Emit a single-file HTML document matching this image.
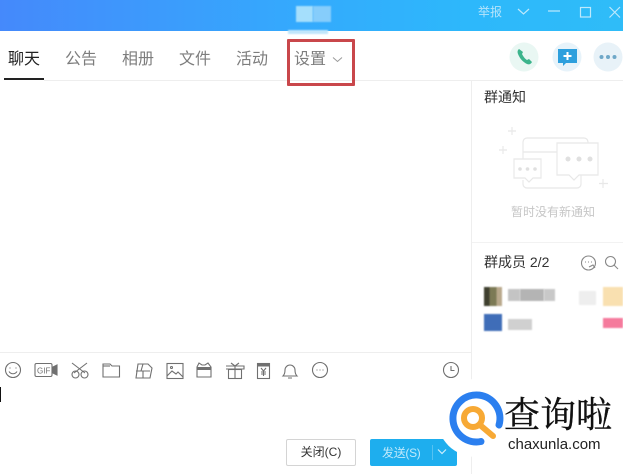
<!DOCTYPE html>
<html lang="zh"><head><meta charset="utf-8">
<style>
html,body{margin:0;padding:0}
#p{position:relative;width:623px;height:474px;overflow:hidden;background:#fff;font-family:"Liberation Sans","Noto Sans CJK SC",sans-serif;filter:blur(.35px)}
#p div{position:absolute}
.t{font-size:16px;line-height:20px;color:#7d7d7d;top:50px;white-space:nowrap}
.b{position:absolute}
.m{filter:blur(.8px)}
</style></head><body><div id="p">
<div style="left:0;top:0;width:623px;height:31px;background:linear-gradient(90deg,#4589fb 0%,#35a8fd 45%,#2db8fb 75%,#2fbcf8 100%)"></div>
<div class="m" style="left:296px;top:6px;width:17px;height:16px;background:#a5dffc"></div>
<div class="m" style="left:313px;top:6px;width:18px;height:16px;background:#86cdfb"></div>
<div class="m" style="left:288px;top:30px;width:40px;height:4px;background:#bfe6fb"></div>
<div style="left:478px;top:4px;font-size:12px;line-height:16px;color:#b5e4fb;white-space:nowrap">举报</div>
<svg class="b" style="left:510px;top:0" width="113" height="31" fill="none" stroke="#bde9fc" stroke-width="1.2"><path d="M8 9l5.500 5 5.500-5"/><path d="M38 11h12"/><rect x="70.500" y="7.500" width="10" height="9.500"/><path d="M99.500 7l10.500 10.500M110 7l-10.500 10.500"/></svg>
<div class="t" style="left:8px;color:#222">聊天</div>
<div style="left:4px;top:78px;width:40px;height:2px;background:#222"></div>
<div style="left:44px;top:80px;width:579px;height:1px;background:#eeeeee"></div>
<div class="t" style="left:65px">公告</div>
<div class="t" style="left:122px">相册</div>
<div class="t" style="left:179px">文件</div>
<div class="t" style="left:236px">活动</div>
<div class="t" style="left:294px">设置</div>
<svg class="b" style="left:332px;top:56px" width="11" height="8" fill="none" stroke="#9a9a9a"><path d="M1 1.500l4.500 4 4.500-4"/></svg>
<div style="left:287px;top:39px;width:62px;height:41px;border:3px solid #c9474b;border-radius:1px"></div>

<svg class="b" style="left:505px;top:38px" width="118" height="40">
<circle cx="19" cy="19" r="14.500" fill="#e9f7f3"/>
<path d="M14 11c-1 1-2 2-1 5 2 5 5 8 9 10 2 1 4 0 5-2l-3-3-2 1c-2-1-4-4-5-6l1-2z" fill="#3cb48c"/>
<circle cx="62" cy="19" r="14.500" fill="#e7f3fa"/>
<path d="M53 11h19v14H61l-3 3v-3h-5z" fill="#2d9fdd"/><path d="M62.500 14v8M58.500 18h8" stroke="#fff" stroke-width="2"/>
<circle cx="103" cy="19" r="14.500" fill="#e8f2f8"/>
<circle cx="96.500" cy="19" r="2" fill="#6fa8c8"/><circle cx="103" cy="19" r="2" fill="#6fa8c8"/><circle cx="109.500" cy="19" r="2" fill="#6fa8c8"/>
</svg>

<div style="left:471px;top:81px;width:1px;height:393px;background:#eeeeee"></div>
<div style="left:484px;top:87px;font-size:14px;line-height:20px;color:#333;white-space:nowrap">群通知</div>
<svg class="b" style="left:495px;top:122px" width="115" height="78" fill="none" stroke="#e8e8e8" stroke-width="1.2">
<path d="M17 5v8M13 9h8M8 24v8M4 28h8M108 57v9M104 61.500h9"/>
<path d="M28 37V20a4 4 0 0 1 4-4h57a4 4 0 0 1 4 4v5M28 30h34M28 58v4a4 4 0 0 0 4 4h50a4 4 0 0 0 4-4v-10"/>
<path d="M62 21h41v32H84l-5 5-5-5-12 0z" fill="#fff"/>
<path d="M19 37h27v19H38l-4 4-4-4H19z" fill="#fff"/>
<g fill="#e0e0e0" stroke="none"><circle cx="73" cy="37" r="2.500"/><circle cx="84" cy="37" r="2.500"/><circle cx="95" cy="37" r="2.500"/><circle cx="25" cy="47" r="1.800"/><circle cx="32.500" cy="47" r="1.800"/><circle cx="40" cy="47" r="1.800"/></g>
</svg>
<div style="left:511px;top:204px;font-size:12px;line-height:17px;color:#c6c6c6;white-space:nowrap">暂时没有新通知</div>
<div style="left:472px;top:242px;width:151px;height:1px;background:#f2f2f2"></div>
<div style="left:484px;top:252px;font-size:14px;line-height:20px;color:#333;white-space:nowrap">群成员 2/2</div>
<svg class="b" style="left:580px;top:254px" width="43" height="18" fill="none" stroke="#888" stroke-width="1.1">
<circle cx="8.500" cy="9" r="7"/><path d="M5 8h1M8 8h1M11 8h1M9 13l4-2 2 3"/>
<circle cx="30.500" cy="7.500" r="5"/><path d="M34 11l4 4"/>
</svg>
<div class="m" style="left:484px;top:287px;width:18px;height:19px;background:linear-gradient(90deg,#3e3f2e 0 30%,#7c7a55 30% 70%,#b9a98c 70%)"></div>
<div class="m" style="left:508px;top:289px;width:12px;height:12px;background:#c4c4c4"></div>
<div class="m" style="left:520px;top:289px;width:24px;height:12px;background:#b4b4b4"></div>
<div class="m" style="left:544px;top:289px;width:11px;height:12px;background:#c8c8c8"></div>
<div class="m" style="left:579px;top:291px;width:17px;height:14px;background:#eeeeee"></div>
<div class="m" style="left:603px;top:287px;width:20px;height:19px;background:#f9e0b0"></div>
<div class="m" style="left:484px;top:314px;width:18px;height:17px;background:#3f6db8"></div>
<div class="m" style="left:508px;top:319px;width:24px;height:11px;background:#d0d0d0"></div>
<div class="m" style="left:603px;top:318px;width:20px;height:10px;background:#f57a9c"></div>

<div style="left:0;top:352px;width:471px;height:1px;background:#eeeeee"></div>
<svg class="b" style="left:0;top:358px" width="471" height="24" fill="none" stroke="#707070" stroke-width="1.1">
<circle cx="13" cy="12" r="7.500"/><path d="M9 13.500c2 3 6 3 8 0M10 9.500v1M16 9.500v1"/>
<rect x="35" y="5.500" width="17" height="13" rx="1.500"/><text x="37" y="15.500" font-family="Liberation Sans" font-size="8" fill="#707070" stroke="none">GIF</text><path d="M53 9l4-2v10l-4-2z" fill="#707070"/>
<path d="M72 5l13 10M87 5L74 15"/><circle cx="75.500" cy="16.500" r="3.500"/><circle cx="84.500" cy="16.500" r="3.500"/>
<path d="M103 6h7l2 2h7.500v11h-16.500z"/><path d="M103 8h7"/>
<path d="M138 6h10l4 4-2 10h-14z"/><path d="M136 13h14M143 13v7M143 6l-2 7"/>
<rect x="167" y="5.500" width="16" height="15"/><path d="M167 18l5-5 4 3 2-2 5 5"/><circle cx="171.500" cy="9.500" r="1"/>
<path d="M197 9l2-4 3 2h3l3-2 3 4v10h-14z"/><path d="M197 10.500h14" stroke-width="3"/>
<rect x="228.500" y="11.500" width="13" height="9"/><path d="M226 8h18v3h-18M235 8v12M231 5l4 3 4-3"/>
<rect x="257.500" y="5.500" width="12" height="15"/><path d="M258 7h11" stroke-width="3"/><path d="M261 10l2.500 3 2.500-3M263.500 13v5M261 14h5M261 16h5"/>
<path d="M283 18c1-1 2-3 2-6a5 5 0 0 1 10 0c0 3 1 5 2 6zM288 20h4"/>
<circle cx="320" cy="12" r="7.500"/><path d="M316.500 12h1M319.500 12h1M322.500 12h1"/>
<circle cx="451" cy="12" r="7.500"/><path d="M451 8v4.500h3.500"/>
</svg>
<div style="left:0;top:387px;width:1px;height:15px;background:#111"></div>

<div style="left:286px;top:439px;width:68px;height:25px;border:1px solid #d4d4d4;border-radius:2px;font-size:12px;line-height:25px;color:#333;text-align:center">关闭(C)</div>
<div style="left:370px;top:439px;width:87px;height:27px;background:#1eaeee;border-radius:2px"></div>
<div style="left:382px;top:444px;font-size:12px;line-height:18px;letter-spacing:-.3px;color:#bfe9fb;white-space:nowrap">发送(S)</div>
<div style="left:432px;top:445px;width:1px;height:15px;background:#55c2f2"></div>
<svg class="b" style="left:437px;top:448px" width="11" height="8" fill="none" stroke="#cdeefc" stroke-width="1.2"><path d="M1 1.500l4 4 4-4"/></svg>

<div style="left:437px;top:379px;width:78px;height:78px;border-radius:50%;background:#fff"></div>
<svg class="b" style="left:445px;top:388px" width="66" height="62" fill="none">
<path d="M54 37A23.500 23.500 0 1 0 36 53.500" stroke="#2b7fef" stroke-width="7" stroke-linecap="round"/>
<circle cx="28" cy="30" r="9" stroke="#f7a935" stroke-width="6"/>
<path d="M35 37l13 11" stroke="#f7a935" stroke-width="6" stroke-linecap="round"/>
</svg>
<div style="left:504px;top:392px;font-family:'Liberation Serif','Noto Serif CJK SC',serif;font-size:36px;line-height:46px;color:#111;white-space:nowrap;-webkit-text-stroke:.3px #111">查询啦</div>
<div style="left:508px;top:436px;font-size:15px;line-height:18px;color:#222;white-space:nowrap">chaxunla.com</div>
</div></body></html>
